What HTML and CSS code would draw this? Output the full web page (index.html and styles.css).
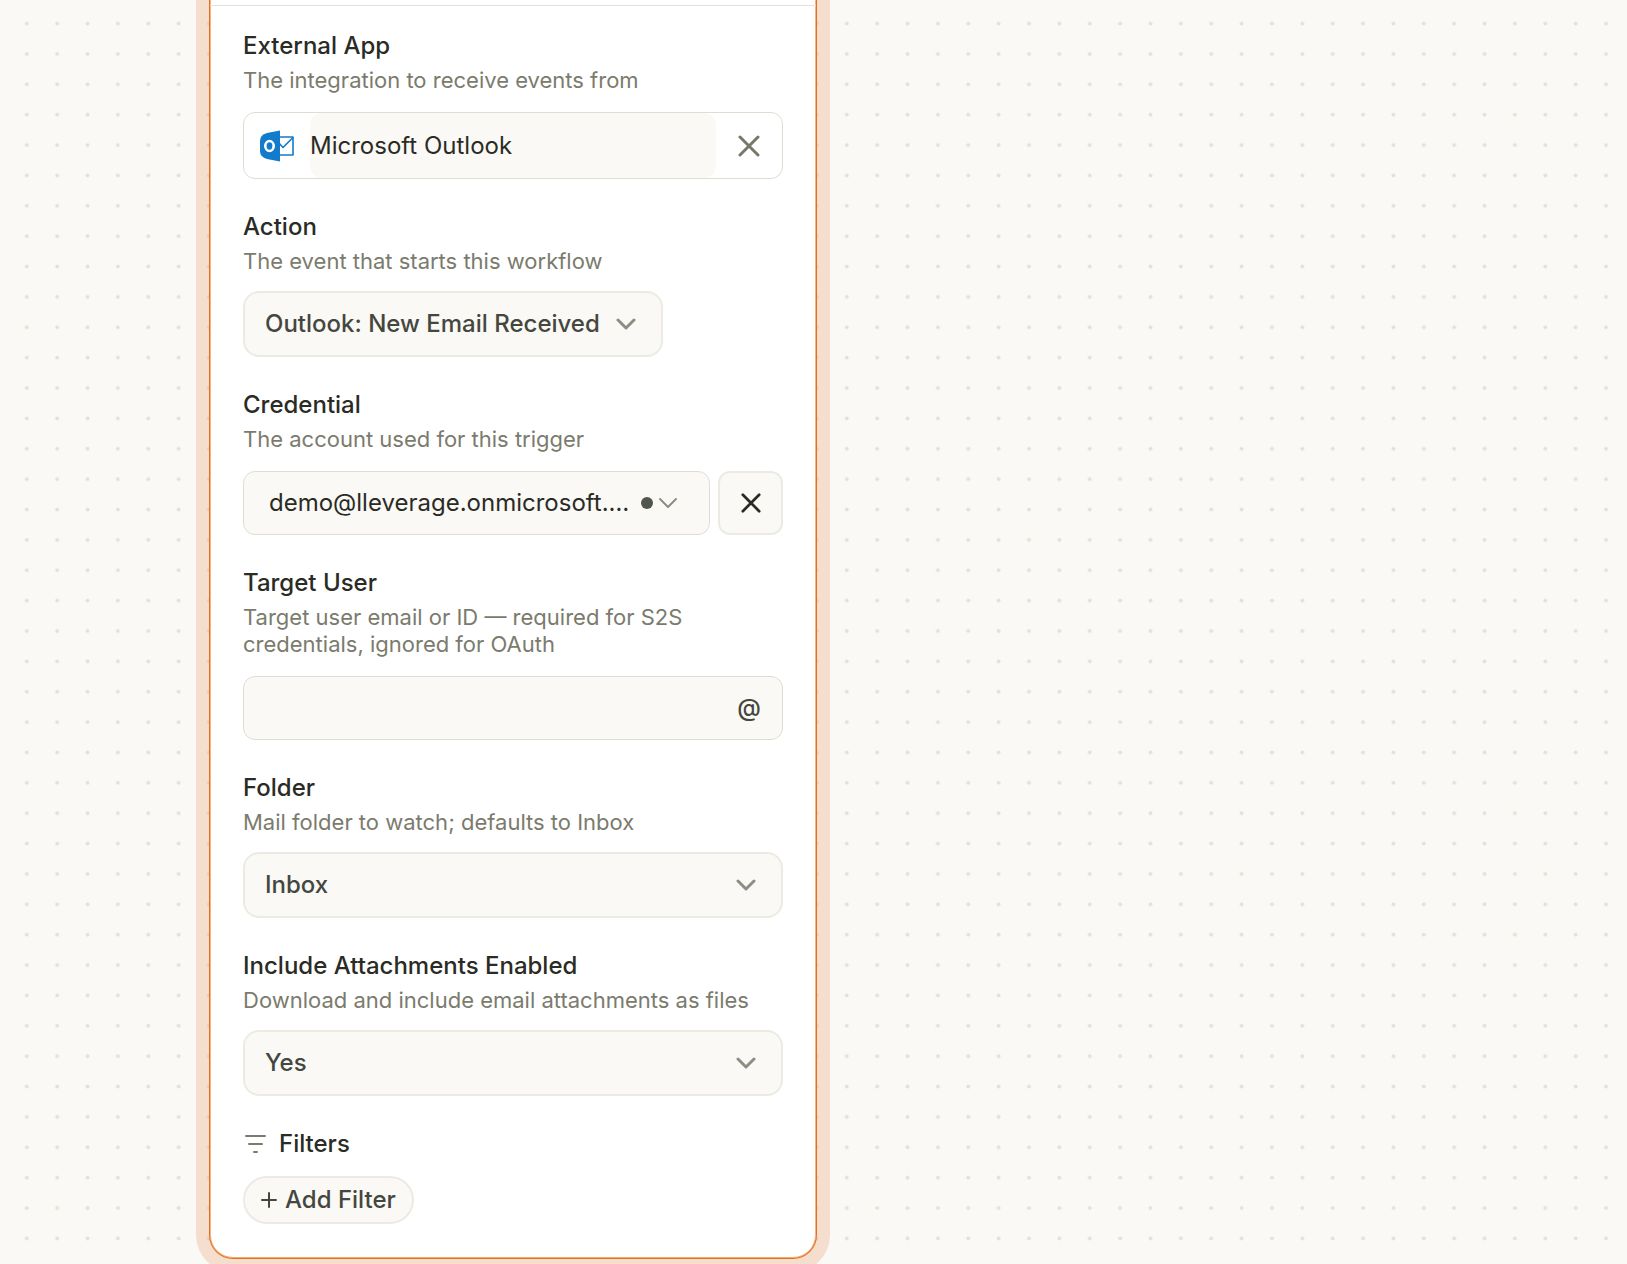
FILE: index.html
```html
<!DOCTYPE html>
<html lang="en">
<head>
<meta charset="utf-8">
<meta name="viewport" content="width=device-width, initial-scale=1">
<title>Workflow trigger</title>
<link rel="stylesheet" href="styles.css">
</head>
<body>
<main class="canvas">
  <svg class="grid" aria-hidden="true">
    <defs>
      <pattern id="dots" x="11.6" y="8.4" width="30.37" height="30.37" patternUnits="userSpaceOnUse">
        <circle cx="15.2" cy="15.2" r="2" fill="#e3e2d9"/>
      </pattern>
    </defs>
    <rect width="100%" height="100%" fill="url(#dots)"/>
  </svg>

  <section class="node" aria-label="Trigger settings">
    <div class="node-header"></div>
    <form class="node-body">
      <div class="field">
        <label class="label" for="app">External App</label>
        <p class="hint">The integration to receive events from</p>
        <div class="app-box">
          <svg class="app-logo" viewBox="0 0 34 32" aria-hidden="true">
            <path d="M18 7h15v18H18z" fill="#fff" stroke="#127bcb" stroke-width="1.600"/>
            <path d="M18 12l5 5.500L32.500 8" fill="none" stroke="#127bcb" stroke-width="1.600"/>
            <path d="M20 .5v31L7 29Q0 27 0 21V11Q0 5 7 3z" fill="#127bcb"/>
            <ellipse cx="9.500" cy="16" rx="4.200" ry="5" fill="none" stroke="#fff" stroke-width="2.600"/>
          </svg>
          <input class="app-input" id="app" type="text" value="Microsoft Outlook">
          <button class="clear" type="button" aria-label="Clear app">
            <svg class="icon-x" viewBox="0 0 22 22"><path d="M2 2l18 18M20 2L2 20"/></svg>
          </button>
        </div>
      </div>

      <div class="field">
        <label class="label" for="action">Action</label>
        <p class="hint">The event that starts this workflow</p>
        <div class="select-wrap fit">
          <select class="select" id="action"><option>Outlook: New Email Received</option></select>
          <svg class="chevron" viewBox="0 0 20 12" aria-hidden="true"><path d="M2 2l8 8 8-8"/></svg>
        </div>
      </div>

      <div class="field">
        <label class="label" for="credential">Credential</label>
        <p class="hint">The account used for this trigger</p>
        <div class="row">
          <div class="select-wrap grow">
            <select class="select account" id="credential"><option>demo@lleverage.onmicrosoft.…</option></select>
            <span class="status"></span>
            <svg class="chevron thin" viewBox="0 0 20 12" aria-hidden="true"><path d="M2 2l8 8 8-8"/></svg>
          </div>
          <button class="remove" type="button" aria-label="Remove credential">
            <svg class="icon-x small" viewBox="0 0 22 22"><path d="M2 2l18 18M20 2L2 20"/></svg>
          </button>
        </div>
      </div>

      <div class="field">
        <label class="label" for="user">Target User</label>
        <p class="hint">Target user email or ID — required for S2S credentials, ignored for OAuth</p>
        <div class="text-box">
          <input class="text-input" id="user" type="text">
          <button class="mention" type="button">@</button>
        </div>
      </div>

      <div class="field">
        <label class="label" for="folder">Folder</label>
        <p class="hint">Mail folder to watch; defaults to Inbox</p>
        <div class="select-wrap">
          <select class="select" id="folder"><option>Inbox</option></select>
          <svg class="chevron" viewBox="0 0 20 12" aria-hidden="true"><path d="M2 2l8 8 8-8"/></svg>
        </div>
      </div>

      <div class="field">
        <label class="label" for="attachments">Include Attachments Enabled</label>
        <p class="hint">Download and include email attachments as files</p>
        <div class="select-wrap">
          <select class="select" id="attachments"><option>Yes</option></select>
          <svg class="chevron" viewBox="0 0 20 12" aria-hidden="true"><path d="M2 2l8 8 8-8"/></svg>
        </div>
      </div>

      <div class="filters">
        <h2 class="label filters-title">
          <svg class="icon-filter" viewBox="0 0 24 20" aria-hidden="true"><path d="M3 2h19M6 10h13M11 18h3"/></svg>
          Filters
        </h2>
        <button class="add" type="button">
          <svg class="icon-plus" viewBox="0 0 16 16" aria-hidden="true"><path d="M8 1v14M1 8h14"/></svg>
          Add Filter
        </button>
      </div>
    </form>
  </section>
</main>
</body>
</html>
```
FILE: styles.css
```css
* {
  box-sizing: border-box;
}

body {
  margin: 0;
  background: #faf9f5;
  color: #2a2b25;
  font: 400 24px/32px Inter, "Liberation Sans", sans-serif;
}

.canvas {
  position: relative;
  height: 100vh;
  padding-left: 209px;
  overflow: hidden;
}

.grid {
  position: absolute;
  inset: 0;
  width: 100%;
  height: 100%;
}

.node {
  position: relative;
  max-width: 608px;
  border: 1px solid #e2701f;
  border-top: 0;
  border-radius: 0 0 24px 24px;
  background: #fff;
  box-shadow: inset 0 -1px #f6a970, inset 1px 0 #f7b482, inset -1px 0 #f7b482, 0 0 0 13px rgba(230, 105, 35, 0.19);
}

.node-header {
  height: 6px;
  border-bottom: 1px solid #e3e1d8;
}

.node-body {
  display: flex;
  flex-direction: column;
  gap: 32px;
  padding: 24px 33px 34px;
}

.field {
  display: flex;
  flex-direction: column;
}

.label {
  margin: 0;
  font-size: 24px;
  font-weight: 500;
  line-height: 32px;
}

.hint {
  margin: 5px 0 16px;
  color: #7b7b6d;
  font-size: 22px;
  line-height: 27px;
}

.app-box,
.row,
.text-box,
.select-wrap {
  position: relative;
  display: flex;
  align-items: center;
}

.app-box,
.row,
.text-box {
  margin-top: 2px;
}

button,
input,
select {
  margin: 0;
  padding: 0;
  border: 0;
  background: none;
  color: inherit;
  font: inherit;
}

.app-box {
  height: 67px;
  padding-left: 16px;
  border: 1px solid #dfddd2;
  border-radius: 12px;
}

.app-logo {
  flex: none;
  width: 34px;
  height: 32px;
  margin-right: 16px;
}

.app-input {
  flex: 1;
  min-width: 0;
  height: 100%;
  border-radius: 12px;
  background: #faf9f5;
}

.clear {
  display: grid;
  place-items: center;
  width: 66px;
  height: 100%;
  color: #78786a;
}

svg {
  fill: none;
  stroke: currentColor;
  stroke-linecap: round;
  stroke-linejoin: round;
}

.app-logo,
.grid {
  stroke: none;
}

.icon-x {
  width: 22px;
  height: 22px;
  stroke-width: 3;
}

.icon-x.small {
  width: 20px;
  height: 20px;
}

.select {
  width: 100%;
  height: 66px;
  padding: 0 56px 0 20px;
  border: 2px solid #ecebe3;
  border-radius: 16px;
  background: #faf9f5;
  color: #45473f;
  font-weight: 500;
  appearance: none;
}

.fit {
  width: 420px;
  max-width: 100%;
}

.grow {
  flex: 1;
}

.chevron {
  position: absolute;
  right: 27px;
  width: 20px;
  height: 12px;
  color: #8d8d82;
  stroke-width: 3;
  pointer-events: none;
}

.select.account {
  height: 64px;
  padding: 0 72px 0 25px;
  border: 1px solid #dfddd2;
  border-radius: 12px;
  color: #2a2b25;
  font-weight: 400;
}

.chevron.thin {
  right: 32px;
  stroke-width: 2;
}

.status {
  position: absolute;
  right: 57px;
  width: 12px;
  height: 12px;
  border-radius: 50%;
  background: #51564d;
}

.row {
  gap: 8px;
}

.remove {
  display: grid;
  place-items: center;
  width: 65px;
  height: 64px;
  border: 2px solid #ecebe3;
  border-radius: 12px;
  background: #faf9f5;
}

.text-box {
  height: 64px;
  border: 1px solid #dfddd2;
  border-radius: 12px;
  background: #faf9f5;
}

.text-input {
  flex: 1;
  min-width: 0;
  height: 100%;
  padding-left: 24px;
}

.mention {
  width: 66px;
  height: 100%;
  color: #45473f;
  font-weight: 500;
}

.filters {
  display: flex;
  flex-direction: column;
  align-items: flex-start;
  gap: 16px;
}

.filters-title {
  display: flex;
  align-items: center;
  gap: 12px;
}

.icon-filter {
  width: 24px;
  height: 20px;
  color: #7b7b6d;
  stroke-width: 2;
}

.add {
  display: flex;
  align-items: center;
  gap: 8px;
  height: 48px;
  padding: 0 16px;
  border: 2px solid #ecebe3;
  border-radius: 24px;
  background: #faf9f5;
  color: #45473f;
  font-weight: 500;
}

.icon-plus {
  width: 16px;
  height: 16px;
  stroke-width: 2;
}
```
